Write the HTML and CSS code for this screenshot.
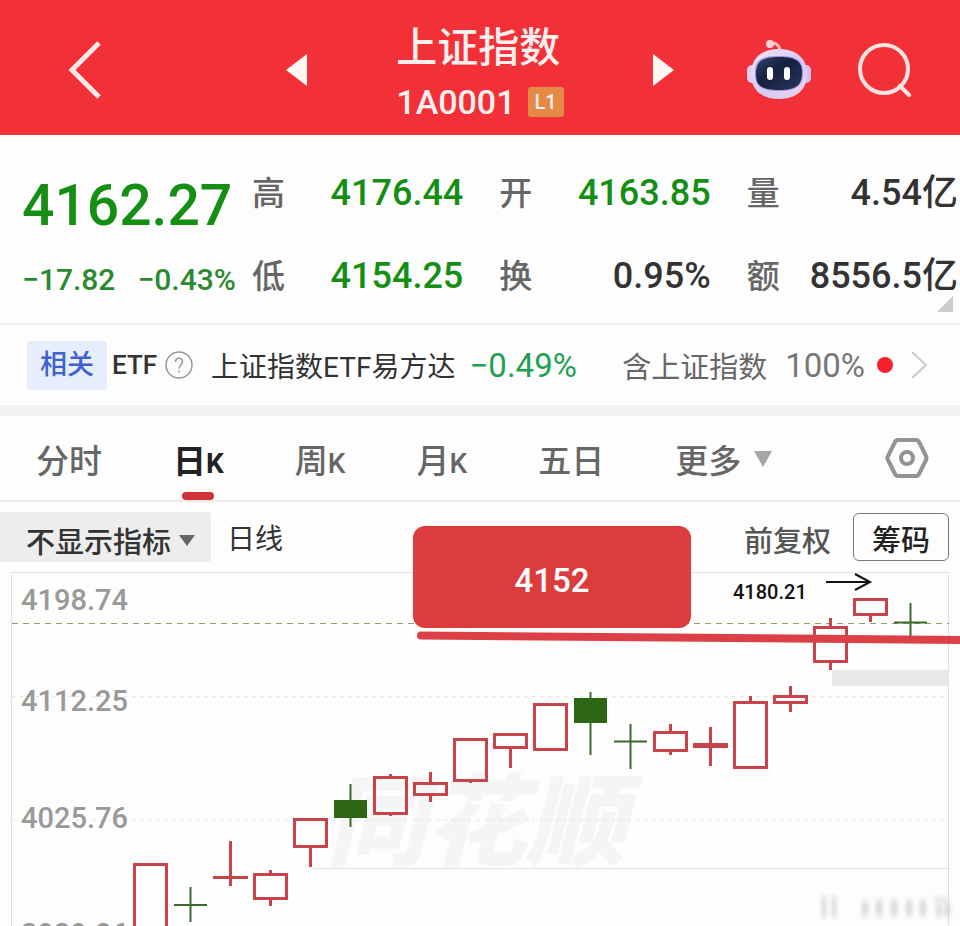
FILE: index.html
```html
<!DOCTYPE html>
<html lang="zh-CN">
<head>
    <meta charset="UTF-8">
    <meta name="viewport" content="width=device-width, initial-scale=1">
    <title>上证指数</title>
    <link rel="stylesheet" href="styles.css">
</head>
<body>
<header class="header">
    <button class="icon-btn back" aria-label="返回">
        <svg width="36" height="60" viewBox="0 0 36 60"><path d="M33 3 6 30 33 57" fill="none" stroke="#ffe9e8" stroke-width="5"/></svg>
    </button>
    <div class="title-box">
        <button class="icon-btn" aria-label="上一个">
            <svg width="22" height="32" viewBox="0 0 22 32"><path d="M22 0v32L1 16z" fill="#fff6f5"/></svg>
        </button>
        <div class="title">
            <h1>上证指数</h1>
            <p class="code">1A0001 <span class="level">L1</span></p>
        </div>
        <button class="icon-btn" aria-label="下一个">
            <svg width="22" height="32" viewBox="0 0 22 32"><path d="M0 0v32l21-16z" fill="#fff6f5"/></svg>
        </button>
    </div>
    <div class="header-right">
        <button class="icon-btn" aria-label="智能助手">
            <svg width="66" height="60" viewBox="0 0 66 60">
                <defs>
                    <linearGradient id="shell" x1="0" y1="0" x2="1" y2="1">
                        <stop offset="0" stop-color="#f6e4f4"/>
                        <stop offset=".55" stop-color="#d3cbf6"/>
                        <stop offset="1" stop-color="#f3d3e6"/>
                    </linearGradient>
                    <linearGradient id="screen" x1="0" y1="0" x2="1" y2="1">
                        <stop offset="0" stop-color="#33406b"/>
                        <stop offset=".4" stop-color="#16213f"/>
                        <stop offset="1" stop-color="#27345c"/>
                    </linearGradient>
                </defs>
                <path d="M24 4c6-2 9 1 10 6" fill="none" stroke="#fbb9c2" stroke-width="3"/>
                <circle cx="24" cy="4" r="4" fill="#fdd3d6"/>
                <rect x="1" y="25" width="10" height="18" rx="5" fill="#ddd0f3"/>
                <rect x="55" y="25" width="10" height="18" rx="5" fill="#cfc0f5"/>
                <path d="M33 9c17 0 28 9 28 25S50 59 33 59 5 50 5 34 16 9 33 9z" fill="url(#shell)"/>
                <path d="M33 16c18 0 24 5 24 17s-6 18-24 18S9 46 9 33s6-17 24-17z" fill="#9b92e0"/>
                <path d="M33 17c17 0 23 4 23 16s-6 17-23 17S10 46 10 34s6-17 23-17z" fill="url(#screen)"/>
                <rect x="21" y="27" width="6" height="13" rx="3" fill="#fff"/>
                <rect x="38" y="27" width="6" height="13" rx="3" fill="#fff"/>
            </svg>
        </button>
        <button class="icon-btn" aria-label="搜索">
            <svg width="54" height="54" viewBox="0 0 54 54" fill="none" stroke="#ffe3e2" stroke-width="4">
                <circle cx="26" cy="26" r="24"/>
                <path d="m42 43 9 9" stroke-linecap="round"/>
            </svg>
        </button>
    </div>
</header>

<section class="quote">
    <div class="price">
        <strong>4162.27</strong>
        <p><span>−17.82</span><span>−0.43%</span></p>
    </div>
    <dl>
        <div><dt>高</dt><dd class="down">4176.44</dd></div>
        <div><dt>开</dt><dd class="down">4163.85</dd></div>
        <div><dt>量</dt><dd>4.54亿</dd></div>
        <div><dt>低</dt><dd class="down">4154.25</dd></div>
        <div><dt>换</dt><dd>0.95%</dd></div>
        <div><dt>额</dt><dd>8556.5亿</dd></div>
    </dl>
    <span class="corner"></span>
</section>

<a class="related" href="#">
    <span class="tag">相关</span>
    <span class="etf">ETF</span>
    <svg class="help" width="28" height="28" viewBox="0 0 28 28" fill="none" stroke="#999">
        <circle cx="14" cy="14" r="13" stroke-width="1.5"/>
        <path d="M10.5 11c0-5 7-5 7 0 0 3-3.500 3-3.500 6.500M14 19.500v2" stroke-width="1.5"/>
    </svg>
    <span class="fund">上证指数ETF易方达</span>
    <span class="fund-rate">−0.49%</span>
    <span class="hold">含上证指数</span>
    <span class="hold-rate">100%</span>
    <span class="dot"></span>
    <svg width="18" height="30" viewBox="0 0 18 30"><path d="M2 2l14 13L2 28" fill="none" stroke="#c9c9c9" stroke-width="2"/></svg>
</a>

<nav class="tabs">
    <button>分时</button>
    <button class="active">日<i>K</i></button>
    <button>周<i>K</i></button>
    <button>月<i>K</i></button>
    <button>五日</button>
    <button class="more">更多<svg width="20" height="18" viewBox="0 0 20 18"><path d="M1 1h18l-9 16z" fill="#a6a6a6"/></svg></button>
    <button class="setting" aria-label="设置">
        <svg width="44" height="42" viewBox="0 0 44 42" fill="none" stroke="#939393" stroke-width="4">
            <path d="M13 3h18q2 0 3 2l7 14q1 2 0 4l-7 14q-1 2-3 2H13q-2 0-3-2L3 23q-1-2 0-4l7-14q1-2 3-2z"/>
            <circle cx="22" cy="21" r="6"/>
        </svg>
    </button>
</nav>

<div class="toolbar">
    <button class="indicator">不显示指标<svg width="16" height="13" viewBox="0 0 16 13"><path d="M0 1h16l-8 11z" fill="#666"/></svg></button>
    <span class="period">日线</span>
    <button class="adjust">前复权</button>
    <button class="chips">筹码</button>
</div>

<div class="chart">
    <svg viewBox="0 0 960 354" role="img" aria-label="日K线图">
        <defs>
            <filter id="soft"><feGaussianBlur stdDeviation="2 3"/></filter>
        </defs>
        <text class="watermark" x="326" y="286">同花顺</text>
        <!-- 边框和网格 -->
        <path class="frame" d="M11.500 354V.5H948.500v353M313 296.500h636"/>
        <path class="grid" d="M12 124.500h937M12 248.500h937"/>
        <path class="last" d="M12 51.500h937"/>
        <rect x="832" y="98" width="117" height="16" fill="#e8e8e8"/>
        <g class="axis">
            <text x="21" y="38">4198.74</text>
            <text x="21" y="139">4112.25</text>
            <text x="21" y="256">4025.76</text>
            <text x="21" y="372">3939.26</text>
        </g>
        <!-- 阳线 -->
        <g class="rise">
            <path d="M134.500 360V292.500h32V360"/>
            <path d="M230.500 269v45M213 305.500h35"/>
            <path d="M254.500 302.500h32v24h-32zM270.500 298v4M270.500 327v7"/>
            <path d="M294.500 247.500h32v27h-32zM310.500 276v19"/>
            <path d="M374.500 205.500h32v36h-32zM390.500 202v3M390.500 242v2"/>
            <path d="M414.500 211.500h32v11h-32zM430.500 200v11M430.500 223v7"/>
            <path d="M454.500 167.500h32v41h-32zM470.500 209v2"/>
            <path d="M494.500 162.500h32v13h-32zM510.500 176v20"/>
            <path d="M534.500 132.500h32v45h-32z"/>
            <path d="M654.500 160.500h32v18h-32zM670.500 152v8M670.500 179v4"/>
            <path d="M710.500 155v39"/>
            <path d="M693 173.500h35" stroke-width="5"/>
            <path d="M734.500 130.500h32v65h-32zM750.500 124v6"/>
            <path d="M774.500 124.500h32v6h-32zM790.500 114v10M790.500 131v9"/>
            <path d="M814.500 55.500h32v34h-32zM830.500 46v9M830.500 90v8"/>
            <path d="M854.500 27.500h32v15h-32zM870.500 43v7"/>
        </g>
        <!-- 阴线 -->
        <g class="fall">
            <path d="M190.500 315v35M174 333h33"/>
            <path d="M350.500 212v43"/>
            <rect x="334" y="228" width="33" height="18"/>
            <path d="M590.500 120v63"/>
            <rect x="574" y="126" width="33" height="25"/>
            <path d="M630.500 152v45M614 169.500h33"/>
            <path d="M910.500 31v33M894 50.500h33"/>
        </g>
        <text class="high" x="733" y="27">4180.21</text>
        <path d="M826 10h43M855 2l15 8-15 8" fill="none" stroke="#111" stroke-width="2"/>
        <path class="support" d="M421 63.500 966 68"/>
        <g filter="url(#soft)" fill="#bbb" opacity=".6">
            <path d="M822 324h4v22h-4zM832 324h4v22h-4z"/>
            <path d="M862 330h6v14h-6zM876 328h6v16h-6zM891 328h6v16h-6zM906 328h6v16h-6zM920 328h6v16h-6zM934 326h14v4h-14zM936 334h6v10h-6zM945 332h5v13h-5z"/>
        </g>
    </svg>
    <div class="callout">4152</div>
</div>
</body>
</html>
```

FILE: styles.css
```css
*{
    margin: 0;
    padding: 0;
    box-sizing: border-box;
}
body{
    background-color: #fdfdfd;
    color: #333;
    font-family: Roboto, "Noto Sans CJK SC", sans-serif;
    font-weight: 500;
    overflow-x: hidden;
}
button{
    border: 0;
    background: none;
    color: inherit;
    font: inherit;
    cursor: pointer;
}
svg{
    display: block;
}
/*顶部*/
.header{
    display: grid;
    grid-template-columns: 1fr auto 1fr;
    align-items: center;
    height: 135px;
    padding: 4px 48px 0;
    background-color: #f23038;
    color: #fff0ef;
}
.back{
    justify-self: start;
    margin-left: 18px;
}
.title-box{
    display: flex;
    align-items: center;
    gap: 89px;
}
.title{
    padding-top: 8px;
}
.title h1{
    font-size: 41px;
    line-height: 56px;
    font-weight: 500;
}
.code{
    display: flex;
    align-items: center;
    gap: 12px;
    font-size: 34px;
    line-height: 52px;
}
.level{
    padding: 0 7px;
    border-radius: 3px;
    background-color: #e58a45;
    font-size: 20px;
    line-height: 30px;
}
.header-right{
    display: flex;
    align-items: center;
    justify-content: flex-end;
    gap: 46px;
}
/*行情*/
.quote{
    position: relative;
    display: grid;
    grid-template-columns: 230px 1fr;
    height: 190px;
    padding: 13px 2px 0 22px;
    border-bottom: 2px solid #f1f1f1;
}
.price{
    color: #148f14;
    white-space: nowrap;
}
.price strong{
    display: block;
    font-size: 57px;
    line-height: 116px;
    font-weight: 500;
}
.price p{
    display: flex;
    gap: 22px;
    font-size: 30px;
    line-height: 32px;
    color: #2b8a2f;
}
.quote dl{
    display: grid;
    grid-template-columns: repeat(3, 1fr);
    grid-auto-rows: 83px;
    column-gap: 36px;
    padding-top: 4px;
}
.quote dl div{
    display: flex;
    align-items: baseline;
    justify-content: space-between;
    line-height: 83px;
    white-space: nowrap;
}
.quote dt{
    font-size: 33px;
    color: #666;
}
.quote dd{
    font-size: 36px;
}
.quote dd.down{
    color: #148f14;
}
.corner{
    position: absolute;
    right: 7px;
    bottom: 11px;
    border-left: 16px solid transparent;
    border-bottom: 16px solid #ccc;
}
/*相关ETF*/
.related{
    display: flex;
    align-items: center;
    height: 91px;
    padding: 0 32px 0 27px;
    border-bottom: 11px solid #f2f2f2;
    color: #333;
    font-size: 27px;
    font-weight: 400;
    text-decoration: none;
    white-space: nowrap;
}
.tag{
    padding: 0 13px;
    border-radius: 4px;
    background-color: #e7edfc;
    color: #3c62cf;
    line-height: 49px;
    font-weight: 500;
}
.etf{
    margin: 0 8px 0 5px;
    font-size: 26px;
    font-weight: 500;
}
.fund{
    margin-left: 18px;
    font-size: 28px;
}
.fund-rate{
    margin-left: 14px;
    font-size: 33px;
    color: #21a052;
}
.hold{
    margin-left: auto;
    font-size: 29px;
    color: #666;
}
.hold-rate{
    margin-left: 18px;
    font-size: 33px;
    color: #777;
}
.dot{
    width: 16px;
    height: 16px;
    margin: 0 17px 0 12px;
    border-radius: 50%;
    background-color: #f5222d;
}
/*周期切换*/
.tabs{
    display: flex;
    align-items: center;
    gap: 71px;
    height: 86px;
    padding: 0 31px 0 36px;
    border-bottom: 2px solid #ebebeb;
    color: #666;
    font-size: 33px;
    white-space: nowrap;
}
.tabs button{
    position: relative;
    height: 84px;
    padding-top: 2px;
}
.tabs i{
    font-size: 28px;
    font-style: normal;
}
.tabs .active{
    color: #222;
    font-weight: 700;
}
.tabs .active::after{
    content: "";
    position: absolute;
    left: 50%;
    bottom: 0;
    width: 32px;
    height: 8px;
    margin-left: -16px;
    border-radius: 4px;
    background-color: #cf3338;
}
.tabs .more{
    display: flex;
    align-items: center;
    gap: 12px;
}
.tabs .setting{
    margin-left: auto;
    padding-top: 0;
}
/*工具栏*/
.toolbar{
    display: flex;
    align-items: center;
    height: 70px;
    padding: 0 11px 0 0;
    font-size: 29px;
    white-space: nowrap;
}
.indicator{
    display: flex;
    align-items: center;
    gap: 8px;
    height: 50px;
    padding: 6px 16px 0 26px;
    border-radius: 0 4px 4px 0;
    background-color: #ededed;
}
.period{
    margin-left: 16px;
    font-size: 28px;
    font-weight: 400;
}
.adjust{
    margin-left: auto;
    padding-top: 4px;
    color: #555;
}
.chips{
    height: 48px;
    margin-left: 22px;
    padding: 2px 18px 0;
    border: 1px solid #777;
    border-radius: 6px;
    color: #222;
}
/*K线图*/
.chart{
    position: relative;
}
.chart svg{
    width: 100%;
    overflow: hidden;
}
.frame{
    fill: none;
    stroke: #e0e0e0;
    stroke-width: 1;
}
.grid{
    stroke: #e2e2e2;
    stroke-width: 1;
    stroke-dasharray: 3 5;
}
.last{
    stroke: #8fa064;
    stroke-width: 1;
    stroke-dasharray: 6 5;
}
.axis{
    fill: #999;
    font-size: 29px;
}
.high{
    fill: #111;
    font-size: 20px;
}
.watermark{
    fill: #f5f5f5;
    font-size: 100px;
    font-style: italic;
    font-weight: 900;
}
.rise{
    fill: none;
    stroke: #c9444a;
    stroke-width: 3;
}
.fall{
    fill: #2d6613;
}
.fall path{
    fill: none;
    stroke: #3d6a2a;
    stroke-width: 2;
}
.support{
    stroke: #dc4046;
    stroke-width: 8;
    stroke-linecap: round;
}
.callout{
    position: absolute;
    top: -46px;
    right: 28%;
    width: 29%;
    height: 102px;
    padding-top: 8px;
    border-radius: 12px;
    background-color: #dc3c3b;
    color: #fff;
    font-size: 33px;
    line-height: 94px;
    text-align: center;
}
```
